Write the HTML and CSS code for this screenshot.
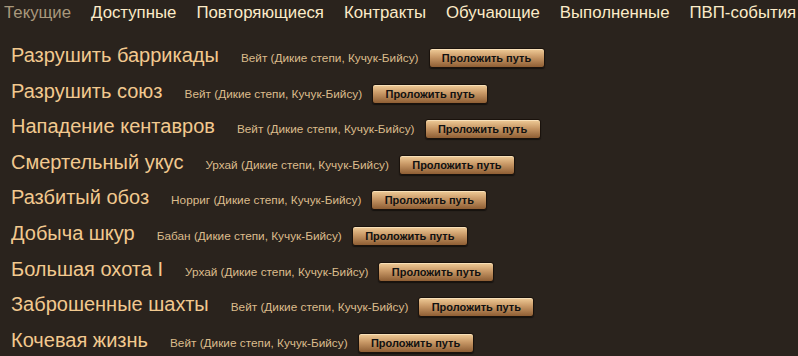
FILE: index.html
```html
<!DOCTYPE html>
<html lang="ru">
<head>
  <meta charset="UTF-8" />
  <title>Задания</title>
  <link rel="stylesheet" href="styles.css">
</head>
<body>
  <div class="tabs">
    <span class="tab active">Текущие</span>
    <span class="tab">Доступные</span>
    <span class="tab">Повторяющиеся</span>
    <span class="tab">Контракты</span>
    <span class="tab">Обучающие</span>
    <span class="tab">Выполненные</span>
    <span class="tab">ПВП-события</span>
  </div>

  <div class="quests">
    <div class="quest">
      <span class="quest-title">Разрушить баррикады</span>
      <span class="quest-place">Вейт (Дикие степи, Кучук-Бийсу)</span>
      <button class="route-btn">Проложить путь</button>
    </div>
    <div class="quest">
      <span class="quest-title">Разрушить союз</span>
      <span class="quest-place">Вейт (Дикие степи, Кучук-Бийсу)</span>
      <button class="route-btn">Проложить путь</button>
    </div>
    <div class="quest">
      <span class="quest-title">Нападение кентавров</span>
      <span class="quest-place">Вейт (Дикие степи, Кучук-Бийсу)</span>
      <button class="route-btn">Проложить путь</button>
    </div>
    <div class="quest">
      <span class="quest-title">Смертельный укус</span>
      <span class="quest-place">Урхай (Дикие степи, Кучук-Бийсу)</span>
      <button class="route-btn">Проложить путь</button>
    </div>
    <div class="quest">
      <span class="quest-title">Разбитый обоз</span>
      <span class="quest-place">Норриг (Дикие степи, Кучук-Бийсу)</span>
      <button class="route-btn">Проложить путь</button>
    </div>
    <div class="quest">
      <span class="quest-title">Добыча шкур</span>
      <span class="quest-place">Бабан (Дикие степи, Кучук-Бийсу)</span>
      <button class="route-btn">Проложить путь</button>
    </div>
    <div class="quest">
      <span class="quest-title">Большая охота I</span>
      <span class="quest-place">Урхай (Дикие степи, Кучук-Бийсу)</span>
      <button class="route-btn">Проложить путь</button>
    </div>
    <div class="quest">
      <span class="quest-title">Заброшенные шахты</span>
      <span class="quest-place">Вейт (Дикие степи, Кучук-Бийсу)</span>
      <button class="route-btn">Проложить путь</button>
    </div>
    <div class="quest">
      <span class="quest-title">Кочевая жизнь</span>
      <span class="quest-place">Вейт (Дикие степи, Кучук-Бийсу)</span>
      <button class="route-btn">Проложить путь</button>
    </div>
  </div>
</body>
</html>
```

FILE: styles.css
```css
body {
  margin: 0;
  font-family: "Liberation Sans", Arial, sans-serif;
  background: #2a231d;
  color: #f0c88e;
  height: 100vh;
  overflow: hidden;
}

.tabs {
  display: flex;
  gap: 20px;
  padding: 0 0 0 4px;
  height: 25px;
  align-items: center;
  white-space: nowrap;
}

.tab {
  font-size: 16.8px;
  color: #fcebc8;
}

.tab.active {
  color: #a8987c;
}

.quests {
  padding: 19px 0 0 11px;
}

.quest {
  display: flex;
  align-items: baseline;
  height: 35.6px;
}

.quest-title {
  font-size: 20px;
  color: #f2c98f;
  margin-right: 22px;
}

.quest-place {
  font-size: 11.8px;
  color: #dcbc8c;
  margin-right: 10px;
}

.route-btn {
  width: 116px;
  height: 20px;
  padding: 0;
  border: 1px solid #1a120c;
  border-radius: 3px;
  background: linear-gradient(to bottom, #f0cc98 0%, #c89866 45%, #8e5e34 100%);
  box-shadow: inset 0 1px 0 rgba(255, 240, 210, 0.6), 0 1px 1px rgba(0, 0, 0, 0.5);
  font-family: "Liberation Sans", Arial, sans-serif;
  font-size: 11px;
  font-weight: bold;
  color: #111;
  cursor: pointer;
}
```
